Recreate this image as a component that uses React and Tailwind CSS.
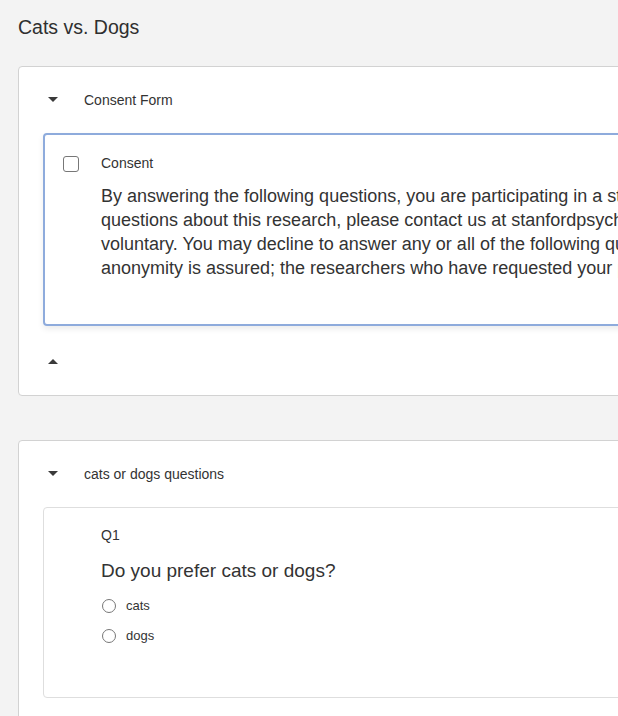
import React from 'react';

const Caret = ({ up }) => (
    <svg width="10" height="6" viewBox="0 0 10 6" className="block">
        {up ? <path d="M0 6 L5 1 L10 6 Z" fill="#3a3a3a" /> : <path d="M0 0 L10 0 L5 5 Z" fill="#3a3a3a" />}
    </svg>
);

const App = () => {
    return (
        <div className="w-[618px] h-[716px] overflow-hidden bg-[#f3f3f3] text-[#333]" style={{ fontFamily: '"Liberation Sans", Arial, sans-serif' }}>
            <div className="w-[900px] pl-[18px]">
                <h1 className="pt-[15px] h-[66px] text-[19.5px] leading-[24px] text-[#2f2f2f]">Cats vs. Dogs</h1>

                <div className="bg-white border border-[#d2d2d2] rounded-[4px] h-[330px]">
                    <div className="flex items-center h-[66px]">
                        <div className="w-[65px] flex justify-center pl-[2px]"><Caret /></div>
                        <span className="text-[14px] text-[#333]">Consent Form</span>
                    </div>
                    <div className="ml-[24px] h-[193px] border-2 border-[#8eabdc] rounded-[4px] shadow-[0_3px_6px_rgba(0,0,0,0.08)]">
                        <div className="flex items-center pt-[18px] pl-[18px]">
                            <div className="w-[16px] h-[16px] border border-[#777] rounded-[3px] bg-white"></div>
                            <span className="ml-[22px] text-[14px]">Consent</span>
                        </div>
                        <p className="ml-[56px] mt-[10px] text-[18px] leading-[24px] text-[#333] whitespace-nowrap">
                            By answering the following questions, you are participating in a study being performed by cognitive scientists<br />
                            questions about this research, please contact us at stanfordpsych251@gmail.com. Your participation<br />
                            voluntary. You may decline to answer any or all of the following questions. You may decline<br />
                            anonymity is assured; the researchers who have requested your participation will not receive
                        </p>
                    </div>
                    <div className="h-[70px] flex items-center">
                        <div className="w-[65px] flex justify-center pl-[2px]"><Caret up /></div>
                    </div>
                </div>

                <div className="mt-[44px] bg-white border border-[#d2d2d2] rounded-[4px] h-[300px]">
                    <div className="flex items-center h-[66px]">
                        <div className="w-[65px] flex justify-center pl-[2px]"><Caret /></div>
                        <span className="text-[14px] text-[#333]">cats or dogs questions</span>
                    </div>
                    <div className="ml-[24px] h-[191px] border border-[#dedede] rounded-[4px]">
                        <div className="pl-[57px] pt-[19px]">
                            <div className="text-[14px] leading-[16px]">Q1</div>
                            <div className="mt-[16px] text-[19px] leading-[24px]">Do you prefer cats or dogs?</div>
                            <div className="mt-[15px] flex items-center h-[16px]">
                                <div className="w-[14px] h-[14px] rounded-full border border-[#777] ml-[1px]"></div>
                                <span className="ml-[10px] text-[13px]">cats</span>
                            </div>
                            <div className="mt-[14px] flex items-center h-[16px]">
                                <div className="w-[14px] h-[14px] rounded-full border border-[#777] ml-[1px]"></div>
                                <span className="ml-[10px] text-[13px]">dogs</span>
                            </div>
                        </div>
                    </div>
                </div>
            </div>
        </div>
    );
};

export default App;
